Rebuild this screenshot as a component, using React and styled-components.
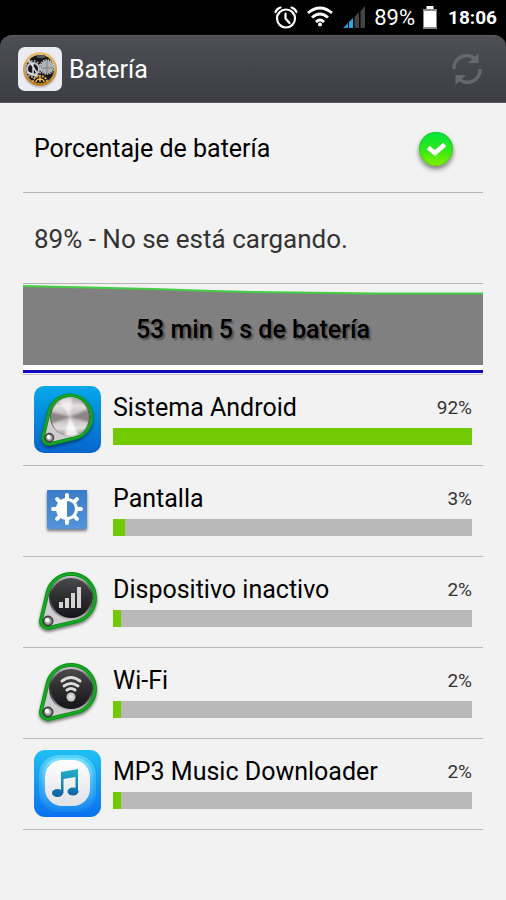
import React, { useState } from 'react';
import styled, { createGlobalStyle } from 'styled-components';

const GlobalStyle = createGlobalStyle`
  body {
    margin: 0;
    color: #000;
    font-family: Roboto, 'Liberation Sans', sans-serif;
    background: #f2f2f2;
  }
`;

const StatusBar = styled.div`
  display: flex;
  align-items: center;
  justify-content: flex-end;
  box-sizing: border-box;
  height: 35px;
  padding: 0 9px;
  gap: 8px;
  color: #fff;
  background: #000;
`;

const Charge = styled.span`
  font-size: 22px;
  line-height: 36px;
`;

const Clock = styled.time`
  margin-left: 3px;
  font-size: 19px;
  font-weight: 700;
  line-height: 36px;
`;

const HeaderBack = styled.header`
  background: #000;
`;

const Header = styled.div`
  display: flex;
  align-items: center;
  justify-content: space-between;
  box-sizing: border-box;
  height: 68px;
  padding: 0 22px 0 18px;
  border-top: 1px solid #5d5e63;
  border-bottom: 1px solid #5c5c60;
  border-radius: 12px 12px 0 0;
  background: linear-gradient(#4d4e56, #3d3e43);
`;

const Brand = styled.div`
  display: flex;
  align-items: center;
  gap: 7px;
`;

const Title = styled.h1`
  margin: 0;
  padding-top: 2px;
  color: #fff;
  font-size: 25px;
  font-weight: 400;
  line-height: 32px;
`;

const RefreshButton = styled.button`
  display: flex;
  padding: 0;
  border: 0;
  background: none;
  cursor: pointer;
`;

const Content = styled.main`
  padding: 0 23px;
`;

const Setting = styled.label`
  display: flex;
  align-items: center;
  justify-content: space-between;
  box-sizing: border-box;
  height: 90px;
  padding: 2px 30px 0 11px;
  border-bottom: 1px solid #b4b4b4;
  font-size: 25px;
`;

const Status = styled.p`
  display: flex;
  align-items: center;
  box-sizing: border-box;
  height: 91px;
  margin: 0;
  padding: 2px 11px 0;
  border-bottom: 1px solid #b4b4b4;
  color: #333;
  font-size: 26px;
`;

const CheckWrap = styled.span`
  position: relative;
  display: flex;
`;

const Check = styled.input`
  width: 34px;
  height: 34px;
  margin: 0;
  border-radius: 50%;
  background: ${(props) => (props.checked ? 'linear-gradient(#02e63c, #2fe81c 50%, #84f000)' : '#c4c4c4')};
  box-shadow: 0 3px 5px rgba(0, 0, 0, 0.5), inset 0 0 2px rgba(0, 110, 0, 0.6);
  appearance: none;
`;

const CheckMark = styled.svg`
  position: absolute;
  top: 0;
  left: 0;
  pointer-events: none;
`;

const History = styled.section`
  display: grid;
  box-sizing: border-box;
  height: 91px;
  border-bottom: 1px solid #c4c4c4;
`;

const Graph = styled.svg`
  grid-area: 1 / 1;
  width: 100%;
  height: 90px;
`;

const GraphText = styled.span`
  grid-area: 1 / 1;
  place-self: center;
  font-size: 25px;
  font-weight: 500;
  text-shadow: 2px 2px 2px rgba(0, 0, 0, 0.4);
`;

const Usage = styled.ul`
  margin: 0;
  padding: 0;
  list-style: none;
`;

const UsageRow = styled.li`
  display: flex;
  align-items: center;
  box-sizing: border-box;
  height: 91px;
  padding: 0 11px 1px;
  gap: 12px;
  border-bottom: 1px solid #b8b8b8;
`;

const Icon = styled.svg`
  flex: none;
  width: 67px;
  height: 67px;
  overflow: visible;
`;

const Info = styled.div`
  flex: 1;
  min-width: 0;
`;

const Labels = styled.div`
  display: flex;
  align-items: center;
  justify-content: space-between;
  height: 42px;
`;

const Name = styled.span`
  font-size: 25px;
`;

const Percent = styled.span`
  color: #333;
  font-size: 19px;
`;

const Track = styled.div`
  height: 17px;
  margin-bottom: 8px;
  background: #b9b9b9;
`;

const Fill = styled.div`
  height: 100%;
  background: #72ca04;
`;

// outline of a belt stretched round two wheels
const beltPath = (x1, y1, r1, x2, y2, r2) => {
  const d = Math.hypot(x2 - x1, y2 - y1);
  const dir = Math.atan2(y2 - y1, x2 - x1);
  const spread = Math.acos((r1 - r2) / d);
  const at = (x, y, r, a) => `${x + r * Math.cos(a)} ${y + r * Math.sin(a)}`;
  return [
    `M${at(x1, y1, r1, dir + spread)}`,
    `A${r1} ${r1} 0 1 1 ${at(x1, y1, r1, dir - spread)}`,
    `L${at(x2, y2, r2, dir - spread)}`,
    `A${r2} ${r2} 0 0 1 ${at(x2, y2, r2, dir + spread)}Z`,
  ].join(' ');
};

const BELT = beltPath(37, 30, 24, 14, 53, 7);

const Shades = () => (
  <svg width="0" height="0" style={{ display: 'block' }} aria-hidden="true">
    <defs>
      <linearGradient id="dark" x1="0" y1="0" x2="0" y2="1">
        <stop offset="0" stopColor="#4a4a4c" />
        <stop offset="0.5" stopColor="#2c2c2e" />
        <stop offset="1" stopColor="#161618" />
      </linearGradient>
      <linearGradient id="rim" x1="0" y1="0" x2="0" y2="1">
        <stop offset="0" stopColor="#c9c4cb" />
        <stop offset="0.4" stopColor="#2e2d2f" />
        <stop offset="0.6" stopColor="#3b393c" />
        <stop offset="1" stopColor="#c5c2c6" />
      </linearGradient>
      <linearGradient id="metal" x1="0" y1="0" x2="0" y2="1">
        <stop offset="0" stopColor="#a39d9f" />
        <stop offset="0.2" stopColor="#e4e1e2" />
        <stop offset="0.5" stopColor="#b9b3b5" />
        <stop offset="0.8" stopColor="#e4e1e2" />
        <stop offset="1" stopColor="#8d8789" />
      </linearGradient>
      <radialGradient id="bolt">
        <stop offset="0" stopColor="#fff" />
        <stop offset="0.5" stopColor="#aaa" />
        <stop offset="1" stopColor="#3a3a3a" />
      </radialGradient>
      <linearGradient id="sky" x1="0" y1="0" x2="0" y2="1">
        <stop offset="0" stopColor="#06a9ea" />
        <stop offset="1" stopColor="#0765cd" />
      </linearGradient>
      <linearGradient id="glow" x1="0" y1="0" x2="0" y2="1">
        <stop offset="0" stopColor="#1fc0f4" />
        <stop offset="1" stopColor="#0a70ee" />
      </linearGradient>
      <linearGradient id="glowInner" x1="0" y1="0" x2="0" y2="1">
        <stop offset="0" stopColor="#7ce4fb" />
        <stop offset="1" stopColor="#188cf2" />
      </linearGradient>
      <linearGradient id="tile" x1="0" y1="0" x2="0" y2="1">
        <stop offset="0" stopColor="#3a7cc8" />
        <stop offset="1" stopColor="#5394d9" />
      </linearGradient>
      <linearGradient id="paper" x1="0" y1="0" x2="0" y2="1">
        <stop offset="0" stopColor="#fff" />
        <stop offset="1" stopColor="#dfe1e6" />
      </linearGradient>
      <linearGradient id="note" gradientUnits="userSpaceOnUse" x1="0" y1="19" x2="0" y2="47">
        <stop offset="0" stopColor="#22b3cc" />
        <stop offset="1" stopColor="#0d5fa3" />
      </linearGradient>
      <linearGradient id="brass" x1="0" y1="0" x2="0" y2="1">
        <stop offset="0" stopColor="#ecc27a" />
        <stop offset="1" stopColor="#b97a22" />
      </linearGradient>
      <filter id="drop" x="-20%" y="-20%" width="140%" height="150%">
        <feDropShadow dx="0" dy="2" stdDeviation="1.5" floodOpacity="0.5" />
      </filter>
      <filter id="soft">
        <feGaussianBlur stdDeviation="1.2" />
      </filter>
      <clipPath id="knob">
        <circle cx="37" cy="30" r="21" />
      </clipPath>
    </defs>
  </svg>
);

const Belt = ({ children }) => (
  <>
    <path d={BELT} fill="#cfcdd0" stroke="#0e8f1c" strokeWidth="4" filter="url(#drop)" />
    <path d={BELT} fill="none" stroke="#17a824" strokeWidth="2" />
    <circle cx="37" cy="30" r="22" fill="url(#rim)" />
    <circle cx="14" cy="53" r="5" fill="url(#bolt)" stroke="#333" strokeWidth="1" />
    <circle cx="13" cy="52" r="2" fill="#fff" />
    {children}
  </>
);

const SystemIcon = () => (
  <Icon viewBox="0 0 67 67" aria-hidden="true">
    <rect width="67" height="67" rx="10" fill="url(#sky)" />
    <g transform="translate(2.7 4) scale(.9)">
      <Belt>
        <circle cx="37" cy="30" r="21" fill="url(#metal)" />
        <g clipPath="url(#knob)">
          <g filter="url(#soft)">
            <path d="M37 30L14 24V38Z" fill="#766f6e" opacity="0.7" />
            <path d="M37 30L60 20V36Z" fill="#766f6e" opacity="0.7" />
            <path d="M37 30L22 8H40Z" fill="#fff" opacity="0.6" />
            <path d="M37 30L30 54H48Z" fill="#fff" opacity="0.8" />
          </g>
        </g>
      </Belt>
    </g>
  </Icon>
);

const ScreenIcon = () => (
  <Icon viewBox="0 0 67 67" aria-hidden="true">
    <rect x="13" y="13" width="40" height="39" rx="1" fill="url(#tile)" filter="url(#drop)" />
    <g transform="translate(33 32)">
      {[0, 45, 90, 135, 180, 225, 270, 315].map((a) => (
        <path key={a} d="M0 -9V-14" stroke="#fff" strokeWidth="4" strokeLinecap="round" transform={`rotate(${a})`} />
      ))}
      <circle r="11" fill="#fff" />
      <path d="M0 -8A8 8 0 0 1 0 8Z" fill="#4383cd" />
    </g>
  </Icon>
);

const IdleIcon = () => (
  <Icon viewBox="0 0 67 67" aria-hidden="true">
    <Belt>
      <circle cx="37" cy="30" r="20" fill="url(#dark)" />
      <path d="M25 34h4v6h-4zM31 30h4v10h-4zM37 25h4v15h-4zM43 19h4v21h-4z" fill="#d5d5d5" />
    </Belt>
  </Icon>
);

const WifiIcon = () => (
  <Icon viewBox="0 0 67 67" aria-hidden="true">
    <Belt>
      <circle cx="37" cy="30" r="20" fill="url(#dark)" />
      <g fill="none" stroke="#dcdcdc" strokeWidth="3" strokeLinecap="round">
        <path d="M28 22Q37 15 46 22" />
        <path d="M30 27Q37 22 44 27" />
        <path d="M33 31Q37 28 41 31" />
      </g>
      <circle cx="37" cy="38" r="4.5" fill="#c9c9c9" />
      <circle cx="37" cy="38" r="2" fill="#e4e4e4" />
    </Belt>
  </Icon>
);

const MusicIcon = () => (
  <Icon viewBox="0 0 67 67" aria-hidden="true">
    <rect width="67" height="67" rx="11" fill="url(#glow)" />
    <rect x="5" y="5" width="57" height="57" rx="20" fill="url(#glowInner)" opacity="0.6" />
    <rect x="8" y="8" width="51" height="51" rx="18" fill="url(#glowInner)" />
    <rect x="11" y="10" width="45" height="46" rx="17" fill="url(#paper)" />
    <g fill="url(#note)">
      <path d="M27 22L44 19V41H41.500V27L29.500 29V43H27Z" />
      <ellipse cx="23.500" cy="43" rx="5.500" ry="4" />
      <ellipse cx="39" cy="41.500" rx="5.500" ry="4" />
    </g>
  </Icon>
);

const GearsIcon = () => (
  <svg width="44" height="44" viewBox="0 0 44 44" aria-hidden="true">
    <rect width="44" height="44" rx="7" fill="#ebebf2" />
    <circle cx="22" cy="24" r="17" fill="#9b9baa" opacity="0.4" />
    <circle cx="22" cy="22" r="17" fill="url(#brass)" />
    <circle cx="22" cy="22" r="14" fill="#151619" />
    <circle cx="15" cy="22" r="6" fill="none" stroke="#bfc2c5" strokeWidth="2" />
    <circle cx="15" cy="22" r="8" fill="none" stroke="#a8abae" strokeWidth="2" strokeDasharray="1.6 1.6" />
    <path d="M10 12l9 14M9 25l11 4M15 16v12" stroke="#d9dadb" strokeWidth="1.500" />
    <circle cx="29" cy="20" r="6.500" fill="#aeb5b3" />
    <circle cx="29" cy="20" r="7" fill="none" stroke="#d5dad8" strokeWidth="1.500" strokeDasharray="1.4 1" />
    <path d="M23 21h12M29 14v13" stroke="#7c8583" strokeWidth="1" />
    <path d="M19 9a8 5 0 0 0 8 0" stroke="#55585b" strokeWidth="3" fill="none" />
    <path d="M15 35a7 6 0 0 1 14 0" stroke="#dfac42" strokeWidth="2" fill="none" strokeDasharray="2 1" />
    <path d="M18 35a4 3 0 0 1 8 0M22 30v5" stroke="#e8bd5c" strokeWidth="1.500" fill="none" />
  </svg>
);

const AlarmGlyph = () => (
  <svg width="24" height="24" viewBox="0 0 24 24" fill="none" stroke="#fff" strokeWidth="2.200" strokeLinecap="round" aria-hidden="true">
    <circle cx="12" cy="12.500" r="9" />
    <path d="M11.500 7.500v5l4 4.500" />
    <path d="M1.500 6Q3 2.500 6.500 1.500M22.500 6Q21 2.500 17.500 1.500" />
  </svg>
);

const WifiGlyph = () => (
  <svg width="28" height="24" viewBox="0 0 28 24" fill="none" stroke="#fff" strokeWidth="2.800" aria-hidden="true">
    <path d="M2 7Q14 -3 26 7" />
    <path d="M6 11.500Q14 4.500 22 11.500" />
    <path d="M10 16Q14 12 18 16" />
    <circle cx="14" cy="18.500" r="2" fill="#fff" stroke="none" />
  </svg>
);

const SignalGlyph = () => (
  <svg width="24" height="23" viewBox="0 0 24 23" aria-hidden="true">
    <path d="M1 22L6 17V22Z" fill="#1d9ad0" />
    <path d="M7 16L11 12V22H7Z" fill="#2aa9e0" />
    <path d="M12.500 11L17 6V22H12.500ZM18.500 5L23 0V22H18.500Z" fill="#444" />
  </svg>
);

const BatteryGlyph = () => (
  <svg width="14" height="23" viewBox="0 0 14 23" aria-hidden="true">
    <path d="M3 0h8v3h3v20H0V3h3z" fill="#8a8a8a" />
    <path d="M4 0h6v3H4zM1 5h12v16H1z" fill="#fff" />
  </svg>
);

const RefreshGlyph = () => (
  <svg width="34" height="34" viewBox="0 0 34 34" fill="none" stroke="#67686c" strokeWidth="3.500" aria-hidden="true">
    <path d="M4 17A12.500 12.500 0 0 1 25 7" />
    <path d="M30 17A12.500 12.500 0 0 1 9 27" />
    <path d="M28.500 1V11H18ZM5.500 33V23H16Z" fill="#67686c" stroke="none" />
  </svg>
);

const APPS = [
  { name: 'Sistema Android', percent: 92, AppIcon: SystemIcon },
  { name: 'Pantalla', percent: 3, AppIcon: ScreenIcon },
  { name: 'Dispositivo inactivo', percent: 2, AppIcon: IdleIcon },
  { name: 'Wi-Fi', percent: 2, AppIcon: WifiIcon },
  { name: 'MP3 Music Downloader', percent: 2, AppIcon: MusicIcon },
];

const MAX = Math.max(...APPS.map((app) => app.percent));

export default function App() {
  const [showPercent, setShowPercent] = useState(true);

  return (
    <>
      <GlobalStyle />
      <Shades />
      <StatusBar>
        <AlarmGlyph />
        <WifiGlyph />
        <SignalGlyph />
        <Charge>89%</Charge>
        <BatteryGlyph />
        <Clock>18:06</Clock>
      </StatusBar>
      <HeaderBack>
        <Header>
          <Brand>
            <GearsIcon />
            <Title>Batería</Title>
          </Brand>
          <RefreshButton type="button" aria-label="Actualizar">
            <RefreshGlyph />
          </RefreshButton>
        </Header>
      </HeaderBack>
      <Content>
        <Setting>
          Porcentaje de batería
          <CheckWrap>
            <Check
              type="checkbox"
              checked={showPercent}
              onChange={(e) => setShowPercent(e.target.checked)}
            />
            <CheckMark width="34" height="34" viewBox="0 0 34 34" aria-hidden="true">
              <path d="M11 17L16 21L24 14" fill="none" stroke="#fff" strokeWidth="4.500" strokeLinecap="square" />
            </CheckMark>
          </CheckWrap>
        </Setting>
        <Status>89% - No se está cargando.</Status>
        <History>
          <Graph viewBox="0 0 460 90" preserveAspectRatio="none" aria-hidden="true">
            <path d="M0 2L130 5L190 7L230 8L350 9L460 9V81H0Z" fill="#808080" />
            <path d="M0 81H460V86H0Z" fill="#fff" />
            <path d="M0 2L130 5L190 7L230 8L350 9.500L460 9.500" fill="none" stroke="#43cf43" strokeWidth="2" />
            <path d="M0 87.500H460" stroke="#1108c4" strokeWidth="3" />
          </Graph>
          <GraphText>53 min 5 s de batería</GraphText>
        </History>
        <Usage>
          {APPS.map(({ name, percent, AppIcon }) => (
            <UsageRow key={name}>
              <AppIcon />
              <Info>
                <Labels>
                  <Name>{name}</Name>
                  <Percent>{percent}%</Percent>
                </Labels>
                <Track>
                  <Fill style={{ width: `${(percent / MAX) * 100}%` }} />
                </Track>
              </Info>
            </UsageRow>
          ))}
        </Usage>
      </Content>
    </>
  );
}
